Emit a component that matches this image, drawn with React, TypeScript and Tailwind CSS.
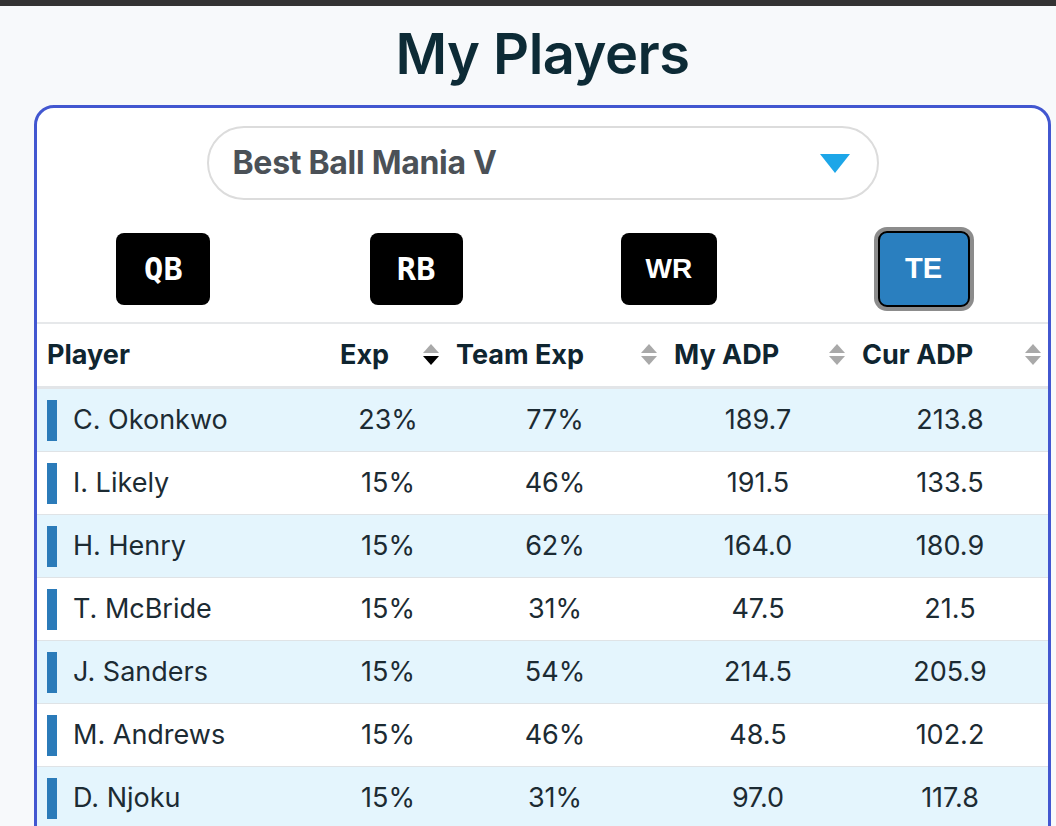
import React from "react";

interface PlayerRow {
  name: string;
  exp: string;
  teamExp: string;
  myAdp: string;
  curAdp: string;
}

const rows: PlayerRow[] = [
  { name: "C. Okonkwo", exp: "23%", teamExp: "77%", myAdp: "189.7", curAdp: "213.8" },
  { name: "I. Likely", exp: "15%", teamExp: "46%", myAdp: "191.5", curAdp: "133.5" },
  { name: "H. Henry", exp: "15%", teamExp: "62%", myAdp: "164.0", curAdp: "180.9" },
  { name: "T. McBride", exp: "15%", teamExp: "31%", myAdp: "47.5", curAdp: "21.5" },
  { name: "J. Sanders", exp: "15%", teamExp: "54%", myAdp: "214.5", curAdp: "205.9" },
  { name: "M. Andrews", exp: "15%", teamExp: "46%", myAdp: "48.5", curAdp: "102.2" },
  { name: "D. Njoku", exp: "15%", teamExp: "31%", myAdp: "97.0", curAdp: "117.8" },
];

function SortIcon({ active }: { active?: boolean }) {
  return (
    <svg width="16" height="22" viewBox="0 0 16 22">
      <polygon points="8,0 16,9 0,9" fill="#a9a9a9" />
      <polygon points="0,12 16,12 8,21" fill={active ? "#000" : "#a9a9a9"} />
    </svg>
  );
}

function HeaderCell({ label, active }: { label: string; active?: boolean }) {
  return (
    <div className="flex items-center justify-between pl-[10px] pr-[7px]">
      <span>{label}</span>
      <SortIcon active={active} />
    </div>
  );
}

export default function App() {
  const cols = "grid grid-cols-[293px_116px_218px_188px_196px]";

  return (
    <div className="h-screen bg-[#f7f9fb] font-['Inter',sans-serif] overflow-hidden">
      <div className="h-[6px] bg-[#333333]" />
      <div className="ml-[34px] w-[1017px]">
        <h1 className="h-[99px] flex items-center justify-center text-[56px] font-semibold text-[#0d2b36] tracking-[-0.5px] pb-[4px]">
          My Players
        </h1>
        <div className="min-h-[780px] rounded-[20px] border-[3px] border-[#4257d0] bg-white overflow-hidden">
          <div className="flex justify-center pt-[18px]">
            <div className="w-[672px] h-[74px] rounded-full border-2 border-[#dcdcdc] flex items-center justify-between pl-[24px] pr-[27px]">
              <span className="text-[32px] font-bold text-[#4b5157] tracking-[-0.3px]">Best Ball Mania V</span>
              <svg width="30" height="19" viewBox="0 0 30 19">
                <polygon points="0,0 30,0 15,19" fill="#1da6e8" />
              </svg>
            </div>
          </div>

          <div className="grid grid-cols-4 items-center h-[122px] pt-[16px]">
            <div className="flex justify-center">
              <button className="w-[94px] h-[72px] rounded-[8px] bg-black text-white text-[32px] font-bold font-['DejaVu_Sans_Mono',monospace]">
                QB
              </button>
            </div>
            <div className="flex justify-center">
              <button className="w-[93px] h-[72px] rounded-[8px] bg-black text-white text-[32px] font-bold font-['DejaVu_Sans_Mono',monospace]">
                RB
              </button>
            </div>
            <div className="flex justify-center">
              <button className="w-[96px] h-[72px] rounded-[8px] bg-black text-white text-[28px] font-bold font-['Liberation_Sans',sans-serif]">
                WR
              </button>
            </div>
            <div className="flex justify-center pl-[4px]">
              <button className="w-[92px] h-[76px] rounded-[9px] bg-[#2a7fbf] border-2 border-black ring-4 ring-[#8c8c8c] text-white text-[29px] font-bold font-['Liberation_Sans',sans-serif]">
                TE
              </button>
            </div>
          </div>

          <div className="border-t-2 border-[#e6e8ea]">
            <div className={`${cols} h-[65px] items-center text-[27px] font-bold text-[#0f2530] border-b-[3px] border-[#e2e5e8]`}>
              <div className="pl-[10px]">Player</div>
              <HeaderCell label="Exp" active />
              <HeaderCell label="Team Exp" />
              <HeaderCell label="My ADP" />
              <HeaderCell label="Cur ADP" />
            </div>
            {rows.map((r, i) => (
              <div
                key={r.name}
                className={`${cols} h-[63px] items-center text-[27px] text-[#1c2b33] border-b border-[#dfe3e6] ${
                  i % 2 === 0 ? "bg-[#e4f5fd]" : "bg-white"
                }`}
              >
                <div className="flex items-center pl-[10px] gap-[16px]">
                  <div className="w-[10px] h-[41px] bg-[#2b7bb9]" />
                  <span>{r.name}</span>
                </div>
                <div className="text-center">{r.exp}</div>
                <div className="text-center">{r.teamExp}</div>
                <div className="text-center">{r.myAdp}</div>
                <div className="text-center">{r.curAdp}</div>
              </div>
            ))}
          </div>
        </div>
      </div>
    </div>
  );
}
